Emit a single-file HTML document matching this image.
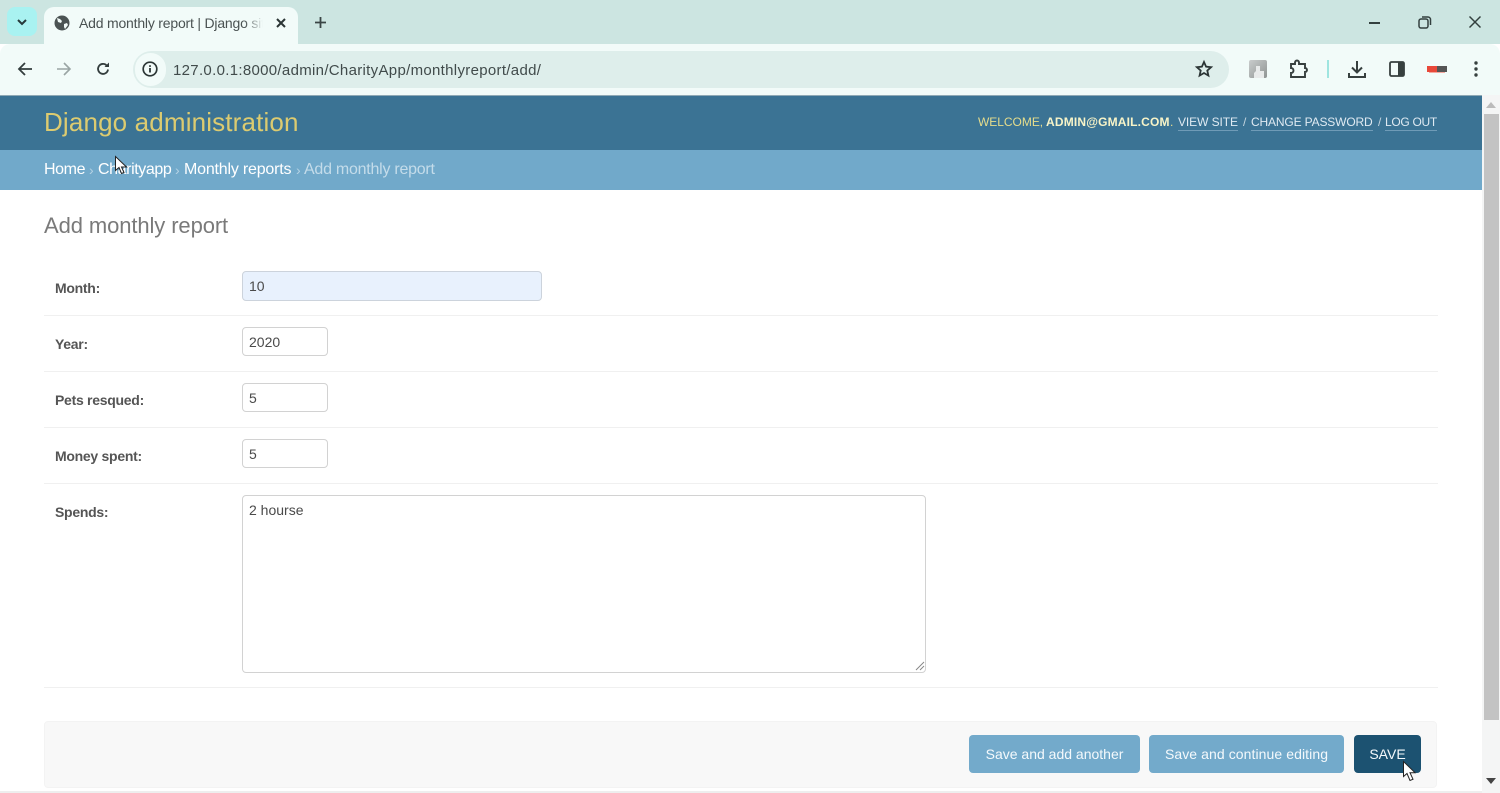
<!DOCTYPE html>
<html><head><meta charset="utf-8"><title>Add monthly report | Django site admin</title>
<style>
*{box-sizing:border-box}
html,body{margin:0;padding:0;width:1500px;height:793px;overflow:hidden;background:#fff;font-family:"Liberation Sans",sans-serif}
.a{position:absolute;white-space:nowrap}
.lbl{position:absolute;left:55px;font-size:14px;font-weight:bold;color:#555;line-height:18px;letter-spacing:-.28px}
.inp{position:absolute;left:242px;width:86px;height:29px;border:1px solid #d2d2d2;border-radius:4px;background:#fff;font-size:14px;color:#4a4a4a;padding:6px 6px;line-height:17px}
.hr{position:absolute;left:44px;width:1394px;height:1px;background:#f0f0f0}
.btn{position:absolute;top:735px;height:38px;border-radius:4px;background:#73aacb;color:#f4f9fc;font-size:14px;line-height:38px;text-align:center}
svg{position:absolute;overflow:visible}
.bc{font-size:16px;color:#fff;top:160px;line-height:20px}
.sep{font-size:14px;color:#b5d2e4;top:160px;line-height:20px}
.ut{font-size:12px;line-height:16px;top:114px;color:#e6dd8c}
.ul{color:#dfeaf2;border-bottom:1px solid #6f9bb7}
</style></head><body>

<!-- browser chrome -->
<div class="a" style="left:0;top:0;width:1500px;height:44px;background:#cce5e1"></div>
<div class="a" style="left:0;top:44px;width:1500px;height:51px;background:#f2fbf9;border-radius:10px 10px 0 0"></div>
<div class="a" style="left:7px;top:7px;width:30px;height:29px;background:#a9f2f1;border-radius:8px"></div>
<svg style="left:17px;top:19px" width="10" height="7"><path d="M1 1l4 4 4-4" fill="none" stroke="#26393a" stroke-width="2"/></svg>
<div class="a" style="left:44px;top:7px;width:254px;height:38px;background:#f2fbf9;border-radius:10px 10px 0 0"></div>
<svg style="left:54px;top:15px" width="16" height="16" viewBox="0 0 16 16"><circle cx="8" cy="8" r="7.5" fill="#4b5353"/><path d="M3 3l3 1 2 2-1 2-3-1zM10 9l3-1 1 2-3 4-1-2z" fill="#f2fbf9"/></svg>
<div class="a" style="left:79px;top:14px;font-size:14px;line-height:18px;color:#4a5252;width:184px;overflow:hidden;letter-spacing:-.2px;-webkit-mask-image:linear-gradient(90deg,#000 90%,transparent)">Add monthly report | Django site admin</div>
<svg style="left:276px;top:18px" width="10" height="10"><path d="M1 1l8 8M9 1L1 9" stroke="#2b3535" stroke-width="2"/></svg>
<svg style="left:314px;top:16px" width="13" height="13"><path d="M6.500 1v11M1 6.500h11" stroke="#3a4545" stroke-width="1.800"/></svg>

<svg style="left:17px;top:62px" width="15" height="14"><path d="M15 7H2M8 1L2 7l6 6" fill="none" stroke="#333d3d" stroke-width="1.800"/></svg>
<svg style="left:57px;top:62px" width="15" height="14"><path d="M0 7h13M7 1l6 6-6 6" fill="none" stroke="#9aa5a4" stroke-width="1.600"/></svg>
<svg style="left:96px;top:62px" width="14" height="14" viewBox="0 0 14 14"><path d="M12 7.500A5 5 0 1 1 10.500 3.300" fill="none" stroke="#333d3d" stroke-width="1.800"/><path d="M8.500 5H13V0.500z" fill="#333d3d"/></svg>

<div class="a" style="left:133px;top:51px;width:1096px;height:37px;background:#deeeeb;border-radius:19px"></div>
<div class="a" style="left:135px;top:53px;width:31px;height:33px;background:#f2fbf9;border-radius:16px"></div>
<svg style="left:142px;top:61px" width="16" height="16" viewBox="0 0 16 16"><circle cx="8" cy="8" r="6.800" fill="none" stroke="#2b3535" stroke-width="1.700"/><path d="M8 7v4.500M8 4.200v1.700" stroke="#2b3535" stroke-width="1.800"/></svg>
<div class="a" style="left:173px;top:61px;font-size:15px;line-height:19px;color:#414b4b;letter-spacing:.31px">127.0.0.1:8000/admin/CharityApp/monthlyreport/add/</div>
<svg style="left:1195px;top:60px" width="18" height="18" viewBox="0 0 18 18"><path d="M9 2l2.100 4.700 5 .5-3.800 3.400 1.100 5L9 13l-4.400 2.600 1.100-5L1.900 7.200l5-.5z" fill="none" stroke="#2b3535" stroke-width="1.800"/></svg>

<div class="a" style="left:1249px;top:60px;width:18px;height:18px;background:linear-gradient(135deg,#c9cccc,#8f9493);border-radius:2px"></div>
<svg style="left:1249px;top:60px" width="18" height="18"><path d="M5 18v-5l2-2V6h4v5h4v7z" fill="#e8eaea"/></svg>
<svg style="left:1289px;top:60px" width="20" height="18" viewBox="0 0 20 18"><path d="M2 4h4V2.500a2 2 0 0 1 4 0V4h6v4a2 2 0 0 1 0 4v5H2v-4a2.500 2.500 0 0 0 0-5z" fill="none" stroke="#37403f" stroke-width="1.900"/></svg>
<div class="a" style="left:1327px;top:60px;width:2px;height:18px;background:#9fe5e0"></div>
<svg style="left:1348px;top:60px" width="18" height="18" viewBox="0 0 18 18"><path d="M9 1v11M4 7.500l5 5 5-5" fill="none" stroke="#37403f" stroke-width="2"/><path d="M1 13v4h16v-4" fill="none" stroke="#37403f" stroke-width="2"/></svg>
<svg style="left:1389px;top:61px" width="16" height="16" viewBox="0 0 16 16"><rect x="1" y="1" width="14" height="14" rx="1.500" fill="#f2fbf9" stroke="#37403f" stroke-width="1.800"/><rect x="9" y="1" width="6" height="14" fill="#37403f"/></svg>
<div class="a" style="left:1427px;top:66px;width:10px;height:6px;background:#e8483a"></div>
<div class="a" style="left:1437px;top:66px;width:10px;height:6px;background:#555"></div>
<div class="a" style="left:1429px;top:72px;width:16px;height:1px;background:#f3a89f"></div>
<svg style="left:1474px;top:61px" width="4" height="16"><circle cx="2" cy="2" r="1.700" fill="#37403f"/><circle cx="2" cy="8" r="1.700" fill="#37403f"/><circle cx="2" cy="14" r="1.700" fill="#37403f"/></svg>

<div class="a" style="left:1369px;top:22px;width:11px;height:1.500px;background:#33403f"></div>
<svg style="left:1418px;top:16px" width="13" height="13"><rect x="1" y="3" width="9" height="9" rx="2" fill="none" stroke="#33403f" stroke-width="1.500"/><path d="M4 1h6a2.500 2.500 0 0 1 2.500 2.500V9" fill="none" stroke="#33403f" stroke-width="1.500"/></svg>
<svg style="left:1469px;top:16px" width="12" height="12"><path d="M.5.500l11 11M11.500.500l-11 11" stroke="#33403f" stroke-width="1.500"/></svg>

<!-- django header -->
<div class="a" style="left:0;top:95px;width:1482px;height:55px;background:#3b7394;border-top:1px solid #8fa9b5"></div>
<div class="a" style="left:44px;top:106px;font-size:26px;line-height:33px;color:#dccb70;letter-spacing:.15px">Django administration</div>

<div class="a ut" style="left:978px;letter-spacing:-.03px">WELCOME,</div>
<div class="a ut" style="left:1046px;letter-spacing:.18px;font-weight:bold;color:#f8f4c8">ADMIN@GMAIL.COM</div>
<div class="a ut" style="left:1170px">.</div>
<div class="a ut ul" style="left:1178px;letter-spacing:-.08px">VIEW SITE</div>
<div class="a ut" style="left:1243px;color:#c5d6e0">/</div>
<div class="a ut ul" style="left:1251px;letter-spacing:-.15px">CHANGE PASSWORD</div>
<div class="a ut" style="left:1378px;color:#c5d6e0">/</div>
<div class="a ut ul" style="left:1385px;letter-spacing:-.3px">LOG OUT</div>

<!-- breadcrumbs -->
<div class="a" style="left:0;top:150px;width:1482px;height:40px;background:#71a9ca"></div>
<div class="a bc" style="left:44px;letter-spacing:-.4px">Home</div>
<div class="a sep" style="left:89px">›</div>
<div class="a bc" style="left:98px;letter-spacing:-.4px">Charityapp</div>
<div class="a sep" style="left:175px">›</div>
<div class="a bc" style="left:184px;letter-spacing:-.2px">Monthly reports</div>
<div class="a sep" style="left:296px">›</div>
<div class="a bc" style="left:304px;color:#c4dcea;letter-spacing:-.25px">Add monthly report</div>

<!-- cursor -->
<svg style="left:115px;top:156px" width="12" height="19" viewBox="0 0 12 19"><path d="M.5.500v14l3.500-3 2.500 6 2.500-1-2.500-5.500h5z" fill="#fff" stroke="#222" stroke-width="1"/></svg>

<!-- content -->
<div class="a" style="left:44px;top:212px;font-size:22px;line-height:28px;color:#7a7a7a;letter-spacing:-.1px">Add monthly report</div>

<div class="lbl" style="top:279px">Month:</div>
<div class="inp" style="top:271px;width:300px;height:30px;background:#e8f1fd;border-color:#ccd3dc">10</div>
<div class="hr" style="top:315px"></div>

<div class="lbl" style="top:335px">Year:</div>
<div class="inp" style="top:327px">2020</div>
<div class="hr" style="top:371px"></div>

<div class="lbl" style="top:391px">Pets resqued:</div>
<div class="inp" style="top:383px">5</div>
<div class="hr" style="top:427px"></div>

<div class="lbl" style="top:447px">Money spent:</div>
<div class="inp" style="top:439px">5</div>
<div class="hr" style="top:483px"></div>

<div class="lbl" style="top:503px">Spends:</div>
<div class="inp" style="top:495px;width:684px;height:178px;border-radius:4px">2 hourse</div>
<svg style="left:915px;top:661px" width="10" height="10"><path d="M1 9l8-8M5 9l4-4" stroke="#888" stroke-width="1"/></svg>
<div class="hr" style="top:687px"></div>

<!-- submit row -->
<div class="a" style="left:44px;top:721px;width:1393px;height:67px;background:#f8f8f8;border:1px solid #f3f3f3;border-radius:4px"></div>
<div class="btn" style="left:969px;width:171px">Save and add another</div>
<div class="btn" style="left:1149px;width:195px;letter-spacing:.08px">Save and continue editing</div>
<div class="btn" style="left:1354px;width:67px;background:#1c5271">SAVE</div>
<svg style="left:1403px;top:761px" width="14" height="21" viewBox="0 0 14 21"><path d="M.5.500v15l3.500-3 3 7 3-1.300-3-6.500h5z" fill="#fff" stroke="#222" stroke-width="1"/></svg>
<div class="a" style="left:0;top:791px;width:1482px;height:2px;background:#eee"></div>

<!-- scrollbar -->
<div class="a" style="left:1482px;top:95px;width:18px;height:698px;background:#f4f5f5"></div>
<div class="a" style="left:1484px;top:114px;width:15px;height:606px;background:#c3c3c3"></div>
<svg style="left:1486px;top:102px" width="10" height="6"><path d="M5 0l5 6H0z" fill="#bbb"/></svg>
<svg style="left:1486px;top:778px" width="10" height="6"><path d="M0 0h10L5 6z" fill="#444"/></svg>

</body></html>
